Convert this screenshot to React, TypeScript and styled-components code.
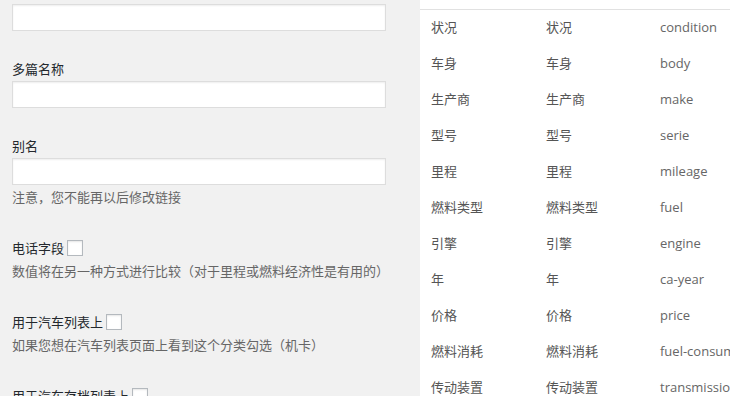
import styled, { createGlobalStyle } from 'styled-components';

const GlobalStyle = createGlobalStyle`
  html, body {
    margin: 0;
    padding: 0;
    background: #f1f1f1;
    overflow: hidden;
  }
  body {
    font-family: "Open Sans", "Noto Sans CJK SC", sans-serif;
    font-size: 13px;
    color: #444;
  }
`;

const rows: [string, string, string][] = [
  ['状况', '状况', 'condition'],
  ['车身', '车身', 'body'],
  ['生产商', '生产商', 'make'],
  ['型号', '型号', 'serie'],
  ['里程', '里程', 'mileage'],
  ['燃料类型', '燃料类型', 'fuel'],
  ['引擎', '引擎', 'engine'],
  ['年', '年', 'ca-year'],
  ['价格', '价格', 'price'],
  ['燃料消耗', '燃料消耗', 'fuel-consumption'],
  ['传动装置', '传动装置', 'transmission'],
];

const App = () => {
  return (
    <>
      <GlobalStyle />
      <Page>
        <FormColumn>
          <TextInput type="text" />

          <Field>
            <Label>多篇名称</Label>
            <TextInput type="text" />
          </Field>

          <Field>
            <Label>别名</Label>
            <TextInput type="text" />
            <Hint $tight>注意，您不能再以后修改链接</Hint>
          </Field>

          <CheckField>
            <CheckLabel>
              <span>电话字段</span>
              <Box type="checkbox" />
            </CheckLabel>
            <Hint>数值将在另一种方式进行比较（对于里程或燃料经济性是有用的）</Hint>
          </CheckField>

          <CheckField>
            <CheckLabel>
              <span>用于汽车列表上</span>
              <Box type="checkbox" />
            </CheckLabel>
            <Hint>如果您想在汽车列表页面上看到这个分类勾选（机卡）</Hint>
          </CheckField>

          <CheckField>
            <CheckLabel>
              <span>用于汽车存档列表上</span>
              <Box type="checkbox" />
            </CheckLabel>
          </CheckField>
        </FormColumn>

        <TablePanel>
          <HeadStrip />
          <TermTable>
            <colgroup>
              <col style={{ width: 115 }} />
              <col style={{ width: 114 }} />
              <col />
            </colgroup>
            <tbody>
              {rows.map(([name, label, slug]) => (
                <tr key={slug}>
                  <NameCell>{name}</NameCell>
                  <NameCell>{label}</NameCell>
                  <SlugCell>{slug}</SlugCell>
                </tr>
              ))}
            </tbody>
          </TermTable>
        </TablePanel>
      </Page>
    </>
  );
};

export default App;

const Page = styled.div`
  display: flex;
  width: 730px;
  height: 396px;
  overflow: hidden;
`;

const FormColumn = styled.div`
  box-sizing: border-box;
  flex: 0 0 420px;
  width: 420px;
  padding: 4px 0 0 12px;
`;

const Field = styled.div`
  margin-top: 28px;
`;

const CheckField = styled.div`
  margin-top: 31px;
`;

const Label = styled.label`
  display: block;
  height: 20px;
  line-height: 20px;
  margin-bottom: 2px;
  color: #23282d;
  font-family: "Noto Sans CJK SC", sans-serif;
`;

const CheckLabel = styled.label`
  display: flex;
  align-items: center;
  gap: 3px;
  height: 20px;
  line-height: 20px;
  color: #23282d;
  font-family: "Noto Sans CJK SC", sans-serif;
`;

const TextInput = styled.input`
  display: block;
  box-sizing: border-box;
  width: 374px;
  height: 27px;
  margin: 0;
  border: 1px solid #ddd;
  background: #fff;
  box-shadow: inset 0 1px 2px rgba(0, 0, 0, 0.07);
  outline: none;
`;

const Box = styled.input`
  appearance: none;
  flex: none;
  width: 16px;
  height: 16px;
  margin: 0;
  border: 1px solid #b4b9be;
  background: #fff;
  box-shadow: inset 0 1px 2px rgba(0, 0, 0, 0.1);
`;

const Hint = styled.p<{ $tight?: boolean }>`
  margin: ${(p) => (p.$tight ? '2px' : '3px')} 0 0;
  line-height: 20px;
  color: #666;
  white-space: nowrap;
  font-family: "Noto Sans CJK SC", sans-serif;
`;

const TablePanel = styled.div`
  flex: 1;
  min-width: 0;
  background: #fff;
  overflow: hidden;
`;

const HeadStrip = styled.div`
  height: 9px;
  border-bottom: 1px solid #e1e1e1;
`;

const TermTable = styled.table`
  table-layout: fixed;
  width: 420px;
  border-collapse: collapse;
  white-space: nowrap;
`;

const NameCell = styled.td`
  box-sizing: border-box;
  height: 36px;
  padding: 0 4px 3px 11px;
  line-height: 20px;
  color: #555;
  font-family: "Noto Sans CJK SC", sans-serif;
`;

const SlugCell = styled.td`
  box-sizing: border-box;
  height: 36px;
  padding: 0 4px 3px 11px;
  line-height: 20px;
  color: #666;
  font-family: "Open Sans", "Noto Sans CJK SC", sans-serif;
`;
